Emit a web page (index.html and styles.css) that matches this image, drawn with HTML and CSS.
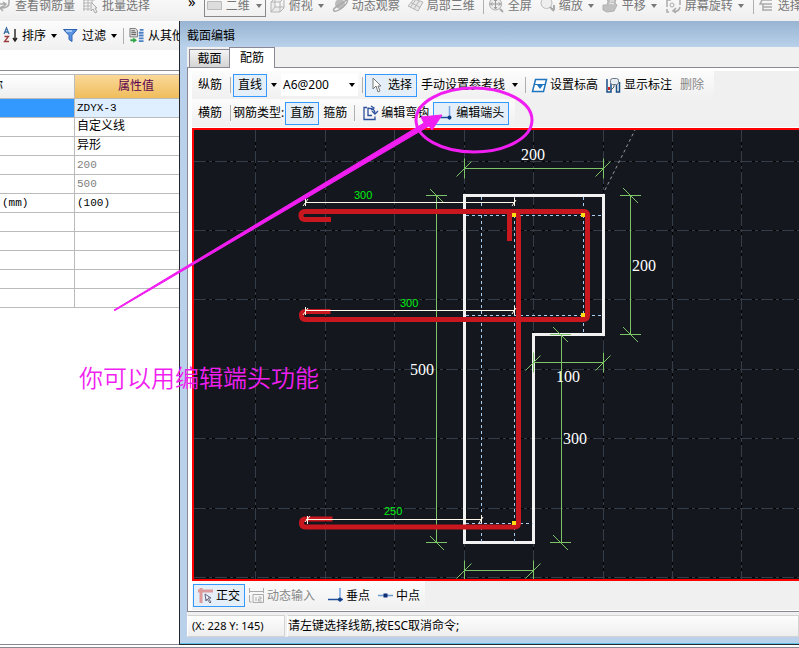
FILE: index.html
```html
<!DOCTYPE html>
<html lang="zh-CN">
<head>
<meta charset="utf-8">
<title>截面编辑</title>
<link rel="stylesheet" href="styles.css">
</head>
<body>
<div class="app">
  <header class="viewbar">
    <button class="tool"><svg class="ico wide" viewBox="0 0 11 15"><path d="M0 5h5M3 3l3 2-3 3M9 0v4q0 5-8 5M3 7l-3 2 3 3" fill="none" stroke="#aaa" stroke-width="1.500"/></svg>查看钢筋量</button>
    <button class="tool"><svg class="ico" viewBox="0 0 15 15"><path d="M0 1h12M0 4h7M0 7h7M0 10h7M1 0v12M5 0v12M9 1v3" stroke="#b5b5b5" fill="none"/><path d="M8 3v9l2-2 2 4 2-1-2-4h2z" fill="#eee" stroke="#aaa"/></svg>批量选择</button>
    <span class="more">»</span>
    <button class="tool framed"><svg class="ico" viewBox="0 0 15 15"><path d="M.5 2.500h14v8h-14z" fill="#ddd" stroke="#bbb"/></svg>二维<i class="caret end"></i></button>
    <button class="tool"><svg class="ico" viewBox="0 0 15 15"><path d="M1 3h9v10h-9zM1 3l4-4h9l-4 4M14-1v10l-4 4M5 0v8h9M5 8l-4 5" fill="#e4e4e4" fill-opacity=".5" stroke="#b5b5b5"/></svg>俯视<i class="caret"></i></button>
    <button class="tool"><svg class="ico" viewBox="0 0 15 15"><circle cx="7" cy="5" r="5" fill="#bbb"/><path d="M1 12q-2-2 5-6t8-6q2 3-4 8t-9 4" fill="none" stroke="#a9a9a9" stroke-width="1.500"/></svg>动态观察</button>
    <button class="tool"><svg class="ico" viewBox="0 0 15 15"><path d="M0 7l6-7 9 3-5 9zM3 3.500l9 5M7.500 1l-5 7M11 2l-5 8" fill="#e8e8e8" stroke="#b5b5b5"/></svg>局部三维</button>
    <i class="sep"></i>
    <button class="tool"><svg class="ico" viewBox="0 0 15 15"><circle cx="6.500" cy="5" r="6" fill="#eee" stroke="#aaa"/><path d="M6.500 0v10M1.500 5h10M5 2l1.500-2 1.500 2M5 8l1.500 2 1.500-2M3.500 3.500l-2 1.500 2 1.500M9.500 3.500l2 1.500-2 1.500" fill="none" stroke="#999"/><path d="M11 10l3 3" stroke="#aaa" stroke-width="2"/></svg>全屏</button>
    <button class="tool"><svg class="ico" viewBox="0 0 15 15"><circle cx="6.500" cy="4" r="5.500" fill="#eee" stroke="#bbb"/><path d="M10 8l4 4M14 6v4h-3" stroke="#aaa" stroke-width="2" fill="none"/></svg>缩放<i class="caret"></i></button>
    <button class="tool"><svg class="ico" viewBox="0 0 15 15"><path d="M0 6l4 0 1-3-1-4 9 1-1 4 2 2-3 6-7 1-4-2z" fill="#c0c0c0" stroke="#b0b0b0"/><path d="M6 4l5 1M7 2l4 0" stroke="#eee"/></svg>平移<i class="caret"></i></button>
    <button class="tool"><svg class="ico" viewBox="0 0 15 15"><path d="M1 8v-7h4M8 0h6v6M14 8q-1 5-6 4M10 9l-3 3 3 2M1 10v3h2" fill="none" stroke="#aaa" stroke-width="1.500"/><circle cx="6" cy="6" r="2" fill="none" stroke="#aaa"/></svg>屏幕旋转<i class="caret"></i></button>
    <i class="sep"></i>
    <button class="tool"><svg class="ico" viewBox="0 0 15 15"><path d="M3 1h10M1 5h12M4 8h9M4 11h9M3 1l-2 4h3v7" fill="none" stroke="#aaa" stroke-width="1.500"/></svg>选择</button>
  </header>

  <main class="work">
    <section class="props">
      <div class="propbar">
        <button class="tool"><svg class="ico" viewBox="0 0 15 15"><path d="M1 6l2.500-6 2.500 6M2 4h3" fill="none" stroke="#3b6ea5" stroke-width="1.300"/><path d="M1.500 8.500h4l-4 5h4.500" fill="none" stroke="#9b3d3d" stroke-width="1.300"/><path d="M12 1v12M10 10l2 3 2-3" fill="none" stroke="#222" stroke-width="1.400"/></svg>排序<i class="caret"></i></button>
        <button class="tool"><svg class="ico" viewBox="0 0 15 15"><path d="M.5 1.500h13.500l-5 6v6l-3-2v-4z" fill="#5a93e0" stroke="#2e62b4"/><path d="M3 3h6" stroke="#bcd8fa" stroke-width="1.500"/></svg>过滤<i class="caret"></i></button>
        <i class="sep"></i>
        <button class="tool"><svg class="ico" viewBox="0 0 15 16"><path d="M.5.500h6l2 2v7h-8z" fill="#ddd" stroke="#777"/><path d="M2 3h4M2 5h5M2 7h5" stroke="#555"/><path d="M1 12h3v-2l4 3-4 3v-2h-3z" fill="#2fa744"/><path d="M11 2h4M10 5h5M10 8h5M10 11h5M10 14h5" stroke="#4a80c4" stroke-width="2"/></svg>从其他</button>
      </div>
      <table class="grid">
        <thead><tr><th class="name"><span class="cut">称</span></th><th class="val">属性值</th></tr></thead>
        <tbody>
          <tr class="on"><td></td><td>ZDYX-3</td></tr>
          <tr><td></td><td class="han">自定义线</td></tr>
          <tr><td></td><td class="han">异形</td></tr>
          <tr class="dim"><td></td><td>200</td></tr>
          <tr class="dim"><td></td><td>500</td></tr>
          <tr><td>(mm)</td><td>(100)</td></tr>
          <tr><td></td><td></td></tr>
          <tr><td></td><td></td></tr>
          <tr><td></td><td></td></tr>
          <tr><td></td><td></td></tr>
          <tr><td></td><td></td></tr>
        </tbody>
      </table>
    </section>

    <section class="dialog">
      <h1 class="title">截面编辑</h1>
      <div class="body">
        <nav class="tabs">
          <button class="tab">截面</button>
          <button class="tab active">配筋</button>
        </nav>
        <div class="page">
          <div class="bars">
            <div class="bar">
              <span class="label">纵筋</span>
              <i class="sep"></i>
              <button class="btn on">直线</button>
              <i class="caret tight"></i>
              <button class="combo">A6@200<i class="caret"></i></button>
              <i class="sep"></i>
              <button class="btn on"><svg class="ico" viewBox="0 0 15 15"><path d="M3 0v11l3-3 2 6 2-1-2-5h3z" fill="#fff" stroke="#777"/></svg>选择</button>
              <button class="btn plain">手动设置参考线<i class="caret"></i></button>
              <i class="sep"></i>
              <button class="btn"><svg class="ico" viewBox="0 0 15 15"><path d="M3.500 1.500h11l-3 12h-11z" fill="#fff" stroke="#1f75bd" stroke-width="1.500"/><path d="M2 6.500h12" stroke="#1f75bd"/><path d="M5 7h6l-3 4z" fill="#1f75bd"/></svg>设置标高</button>
              <button class="btn"><svg class="ico" viewBox="0 0 15 15"><path d="M1 1v13h4v-9M13.500 4v10h-3v-7" fill="none" stroke="#1b4f86" stroke-width="1.500"/><rect x="4.500" y=".5" width="8" height="6" rx="2" fill="#e8edf4" stroke="#6c7787"/><path d="M8 7v2l-3 3" fill="none" stroke="#555"/><path d="M2 9h2v3h-2z" fill="#c22"/></svg>显示标注</button>
              <button class="btn" disabled>删除</button>
            </div>
            <div class="bar">
              <span class="label">横筋</span>
              <i class="sep"></i>
              <span class="kind">钢筋类型:</span>
              <button class="btn on">直筋</button>
              <button class="btn">箍筋</button>
              <i class="sep roomy"></i>
              <button class="btn"><svg class="ico" viewBox="0 0 15 15"><path d="M4 1.500h-3v12h11v-3M5 1.500v8h4" fill="none" stroke="#2d4f9e" stroke-width="1.300"/><path d="M5 2.500q6-1 7 4M9 5l3 3 3-3M8 0l3 2-3 2" fill="none" stroke="#2d4f9e" stroke-width="1.300"/></svg>编辑弯钩</button>
              <button class="btn on"><svg class="ico" viewBox="0 0 15 15"><path d="M0 11.500h13" stroke="#1e4f9c" stroke-width="1.500"/><path d="M11.500 0v14" stroke="#7aa5e0" stroke-width="1.500"/><circle cx="11.500" cy="11.500" r="2" fill="#123e85"/></svg>编辑端头</button>
            </div>
          </div>
          <div class="canvas">
            <svg class="drawing" role="img" aria-label="配筋截面图">
              <defs>
                <g id="tick"><path d="M0-10v20" /><path d="M-8 8l15-15"/></g>
                <path id="mesh" d="M194 161.500h4000M194 230.500h4000M194 299.500h4000M194 369.500h4000M194 438.500h4000M194 508.500h4000M194 577.500h4000M255.500 130v3000M325.500 130v3000M394.500 130v3000M464.500 130v3000M533.500 130v3000M603.500 130v3000M672.500 130v3000M741.500 130v3000M811.500 130v3000M880.500 130v3000M950.500 130v3000"/>
              </defs>
              <g transform="translate(-194 -130)">
                <use href="#mesh" stroke="#000"/>
                <use href="#mesh" stroke="#343d48" stroke-dasharray="12 3 3 3"/>
                <path d="M605 190l30-60" stroke="#999" stroke-dasharray="3 3"/>
                <path class="outline" d="M464.500 195.500h139v139h-70v208h-69z"/>
                <path class="guide" d="M481.500 197v345M514.500 197v345M583.500 197v137M466 215.500h137M466 315.500h137M466 523.500h67"/>
                <g class="dim">
                  <path d="M464 168.500h140M436.500 195v348M630.500 195v140M561.500 334v208M533 362.500h70M464 570.500h70"/>
                  <use href="#tick" x="464.500" y="168.500"/><use href="#tick" x="603.500" y="168.500"/>
                  <use href="#tick" x="533.500" y="362.500"/><use href="#tick" x="603.500" y="362.500"/>
                  <use href="#tick" x="464.500" y="570.500"/><use href="#tick" x="533.500" y="570.500"/>
                  <path d="M426 195.500h21M430 189l14 14M426 542.500h21M430 536l14 14M620 195.500h21M623 188l15 15M620 334.500h21M623 327l15 15M550 334.500h21M553 327l15 15M550 542.500h21M553 535l15 15"/>
                </g>
                <g class="rebar">
                  <path d="M331 219.500h-26q-4 0-4-4t4-4h279q3.500 0 3.500 4v100q0 4-4 4h-278q-4 0-4-4t4-4h25"/>
                  <path d="M509.500 241v-26q0-3 4-3t5 5v306q0 4-4 4h-209q-4 0-4-4t4-4h27"/>
                </g>
                <path d="M512 213h4v4h-4zM581 213h4v4h-4zM581 313h4v4h-4zM512 521h4v4h-4z" fill="#ffdc12"/>
                <g class="measure">
                  <path d="M305 202.500h210M305 310.500h210M306 519.500h176"/>
                  <path d="M305.500 198v8M303 206l5-7M514.500 198v8M512 206l4-6M305.500 307v8M303 315l5-7M514.500 306v9M512 314l4-6M307.500 516v8M305 522l5-6M481.500 515v8M479 523l4-6"/>
                </g>
                <g class="small"><text x="354" y="199">300</text><text x="400" y="307">300</text><text x="384" y="515">250</text></g>
                <g class="large"><text x="521" y="160">200</text><text x="632" y="271">200</text><text x="410" y="375">500</text><text x="556" y="382">100</text><text x="563" y="444">300</text></g>
              </g>
            </svg>
          </div>
          <div class="snapbar">
            <div class="bar snap">
              <button class="btn on"><svg class="ico" viewBox="0 0 15 15"><path d="M0 3h15M3 0v15" stroke="#dd9a9a" stroke-width="3"/><path d="M7 6l6 4-3 0 3 4-1 1-3-4-1 2z" fill="#eef" stroke="#667"/></svg>正交</button>
              <button class="btn" disabled><svg class="ico" viewBox="0 0 15 15"><path d="M.5 0v5M14.500 0v5M0 3.500h15M.5 7v7h2M4 6.500h10.500v8h-10.500zM7 9v4M9.500 9h2.500v2h-2.500v2h3" fill="none" stroke="#aaa"/></svg>动态输入</button>
              <button class="btn gap"><svg class="ico" viewBox="0 0 15 15"><path d="M0 11.500h15" stroke="#1e4f9c" stroke-width="1.500"/><path d="M12 0v14" stroke="#7aa5e0" stroke-width="1.500"/><circle cx="12" cy="11.500" r="2" fill="#123e85"/></svg>垂点</button>
              <button class="btn"><svg class="ico" viewBox="0 0 15 15"><path d="M0 7.500h15" stroke="#6f9ad2" stroke-width="1.500"/><path d="M5.500 5.500h4v4h-4z" fill="#0c2f77"/></svg>中点</button>
            </div>
          </div>
        </div>
        <footer class="status">
          <span class="cell coords">(X: 228 Y: 145)</span>
          <span class="cell hint">请左键选择线筋,按ESC取消命令;</span>
        </footer>
      </div>
    </section>
  </main>
</div>
<svg class="callout" aria-hidden="true">
  <ellipse cx="474" cy="120" rx="58" ry="32" fill="none" stroke="#f01ef0" stroke-width="3"/>
  <path d="M114 310L424 123l-3-6 21-2-10 15-3-4L115 310.500z" fill="#f01ef0" stroke="#f01ef0"/>
</svg>
<p class="remark">你可以用编辑端头功能</p>
</body>
</html>
```
FILE: styles.css
```css
* { box-sizing: border-box; }
body {
  margin: 0;
  overflow: hidden;
  background: #fff;
  color: #000;
  font: 12px/14px "Noto Sans", "Noto Sans CJK SC", sans-serif;
}
button {
  margin: 0;
  padding: 0;
  border: 0;
  background: none;
  color: inherit;
  font: inherit;
  white-space: nowrap;
}
.app { display: flex; flex-direction: column; height: 100vh; }

.ico { flex: none; width: 15px; height: 15px; overflow: visible; }
.ico.wide { width: 11px; }
.caret {
  flex: none;
  width: 6px;
  height: 4px;
  margin: 0 1px;
  border: solid transparent;
  border-width: 4px 3px 0;
  border-top-color: currentColor;
}
.sep { flex: none; width: 1px; height: 16px; background: #b0b0b0; }
.tool, .btn { display: flex; flex: none; align-items: center; gap: 4px; }

/* view toolbar */
.viewbar {
  display: flex;
  flex: none;
  gap: 8px;
  height: 21px;
  overflow: hidden;
  background: linear-gradient(#f8f8f8, #eee);
  color: #777;
}
.viewbar .tool { height: 12px; }
.viewbar .sep { height: 14px; margin-right: -3px; }
.viewbar .framed {
  width: 62px;
  height: 17px;
  margin-right: -4px;
  padding: 0 2px 4px;
  border: 1px solid #888;
  border-top: 0;
}
.caret.end { margin-left: auto; }
.more { width: 45px; padding-left: 30px; color: #000; font-size: 15px; line-height: 2px; }

.work {
  display: flex;
  flex: 1;
  min-height: 0;
  padding-bottom: 2px;
  border-bottom: 1px solid #8b8793;
}

/* property list */
.props { flex: none; width: 179px; overflow: hidden; border-bottom: 1px solid #8b8793; }
.propbar {
  display: flex;
  align-items: center;
  gap: 5px;
  height: 29px;
  padding-left: 3px;
  background: linear-gradient(#fcfcfc, #f0f0f0);
}
.grid {
  width: 198px;
  margin-top: 20px;
  padding-top: 3px;
  border-top: 1px solid #8b8793;
  border-spacing: 0;
  table-layout: fixed;
  font-family: "Liberation Mono", "Noto Sans CJK SC", monospace;
}
.grid th, .grid td {
  height: 19px;
  padding: 0 2px;
  border: solid #bbb;
  border-width: 0 1px 1px 0;
  font-size: 11px;
  font-weight: 400;
  line-height: 14px;
  text-align: left;
}
.grid .han { font-size: 12px; }
.grid th { height: 25px; border-top: 1px solid #bbb; font-size: 12px; text-align: center; }
.grid .name { width: 75px; overflow: hidden; background: linear-gradient(#fff, #eee); text-align: left; }
.cut { margin-left: -11px; }
.grid .val { background: linear-gradient(#fad898, #efbd5c); color: #5b0050; }
.grid .on td { background: #e0efff; }
.grid .on td:first-child { background: #3399ff; }
.grid .dim { color: #808080; }

/* section editor window */
.dialog {
  display: flex;
  flex: 1;
  flex-direction: column;
  min-width: 0;
  padding: 0 0 7px 7px;
  border-left: 1px solid #26262c;
  border-bottom: 1px solid #26262c;
  background: #b9d1ea;
  box-shadow: inset 0 -1px #5fc4e8;
}
.title {
  flex: none;
  height: 26px;
  margin: 0 0 0 -7px;
  padding: 8px 0 0 7px;
  background: linear-gradient(#98b4d2, #b9d1ea);
  font: inherit;
}
.body { display: flex; flex: 1; flex-direction: column; min-height: 0; background: #f0f0f0; }
.tabs { display: flex; flex: none; align-items: flex-end; height: 20px; padding-left: 2px; }
.tab {
  width: 40px;
  height: 18px;
  border: 1px solid #8b8793;
  border-width: 1px 0 0 1px;
  background: linear-gradient(#f4f4f4, #d4d4d4);
}
.tab.active {
  z-index: 1;
  width: 46px;
  height: 21px;
  margin-bottom: -1px;
  border-width: 1px 1px 0;
  background: #fff;
}
.page {
  display: flex;
  flex: 1;
  flex-direction: column;
  min-height: 0;
  padding: 3px 0 1px 4px;
  border: solid #8b8793;
  border-width: 1px 0 1px 1px;
  background: #fff;
}
.bars, .snapbar { flex: none; background: #f0f0f0; }
.bar {
  display: flex;
  align-items: center;
  width: max-content;
  height: 28px;
  padding: 0 6px;
  background: linear-gradient(#fcfcfc, #f0f0f0);
}
.btn { gap: 3px; height: 23px; padding: 0 3px; border: 1px solid transparent; }
.btn.on { padding: 0 4px; border-color: #3399ff; background: #e5eff9; }
.btn:disabled { color: #888; }
.btn.plain { padding-right: 0; }
.btn.plain .caret { margin: 0 6px 0 4px; }
.label { padding-right: 8px; }
.bar .sep { margin-right: 2px; }
.bar .sep.roomy { margin: 0 4px 0 3px; }
.caret.tight { margin: 0 4px; }
.combo {
  display: flex;
  align-items: center;
  justify-content: space-between;
  width: 77px;
  height: 22px;
  margin-right: 4px;
  padding: 0 2px;
  background: #fff;
}
.kind { padding-right: 1px; }

.canvas {
  flex: 1;
  min-height: 0;
  margin-top: 1px;
  border: 2px solid #f00;
  border-right: 0;
  background: #14171e;
}
.drawing { display: block; width: 100%; height: 100%; fill: none; }
.outline { stroke: #f2f2f2; stroke-width: 3; }
.guide { stroke: #a9cdf0; stroke-dasharray: 3 3; }
.drawing .dim { stroke: #7cc466; }
.rebar { stroke: #c8171e; stroke-width: 5; }
.measure { stroke: #fff9ea; }
.small { fill: #00f010; font: 11px "Liberation Sans", sans-serif; }
.large { fill: #fff; font: 16px "Liberation Serif", serif; }

.snap { height: 29px; padding: 0 1px; }
.snap .gap { margin-left: 5px; }
.status { display: flex; flex: none; gap: 2px; padding-top: 3px; }
.cell {
  height: 22px;
  padding: 3px 4px;
  border: 1px solid #d4d4d4;
  border-left-color: #fff;
  background: linear-gradient(#fdfdfd, #eee);
}
.coords { width: 98px; font-size: 11px; white-space: nowrap; }
.hint { flex: 1; padding-left: 0; }

/* annotation over the windows */
.callout { position: absolute; inset: 0; width: 100%; height: 100%; pointer-events: none; }
.remark {
  position: absolute;
  left: 79px;
  top: 362px;
  margin: 0;
  color: #f01ef0;
  font: 350 24px/30px "Noto Sans CJK SC", sans-serif;
  white-space: nowrap;
}
```
